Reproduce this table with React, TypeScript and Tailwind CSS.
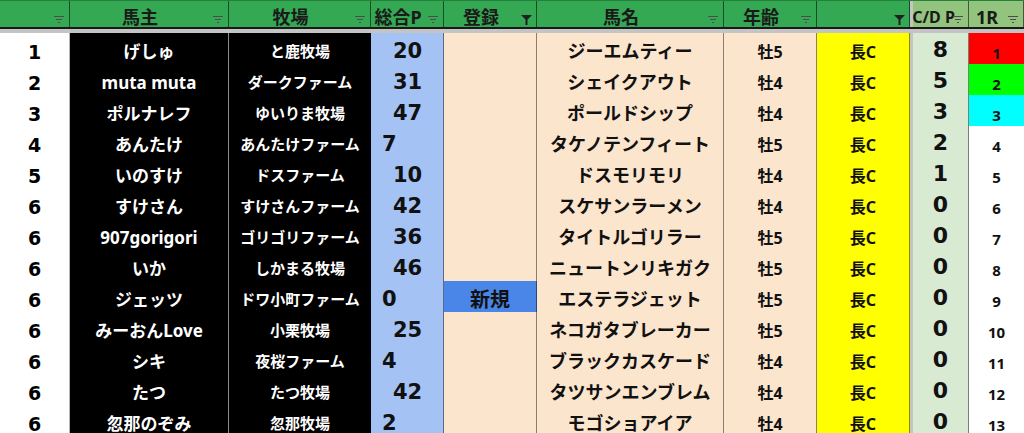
import React from 'react';

type Row = {
  rank: number;
  owner: string;
  farm: string;
  total: number;
  entry: string;
  horse: string;
  age: string;
  dist: string;
  cdp: number;
  r1: number;
};

const rows: Row[] = [
  { rank: 1, owner: 'げしゅ', farm: 'と鹿牧場', total: 20, entry: '', horse: 'ジーエムティー', age: '牡5', dist: '長C', cdp: 8, r1: 1 },
  { rank: 2, owner: 'muta muta', farm: 'ダークファーム', total: 31, entry: '', horse: 'シェイクアウト', age: '牡4', dist: '長C', cdp: 5, r1: 2 },
  { rank: 3, owner: 'ポルナレフ', farm: 'ゆいりま牧場', total: 47, entry: '', horse: 'ポールドシップ', age: '牡4', dist: '長C', cdp: 3, r1: 3 },
  { rank: 4, owner: 'あんたけ', farm: 'あんたけファーム', total: 7, entry: '', horse: 'タケノテンフィート', age: '牡5', dist: '長C', cdp: 2, r1: 4 },
  { rank: 5, owner: 'いのすけ', farm: 'ドスファーム', total: 10, entry: '', horse: 'ドスモリモリ', age: '牡4', dist: '長C', cdp: 1, r1: 5 },
  { rank: 6, owner: 'すけさん', farm: 'すけさんファーム', total: 42, entry: '', horse: 'スケサンラーメン', age: '牡4', dist: '長C', cdp: 0, r1: 6 },
  { rank: 6, owner: '907gorigori', farm: 'ゴリゴリファーム', total: 36, entry: '', horse: 'タイトルゴリラー', age: '牡5', dist: '長C', cdp: 0, r1: 7 },
  { rank: 6, owner: 'いか', farm: 'しかまる牧場', total: 46, entry: '', horse: 'ニュートンリキガク', age: '牡5', dist: '長C', cdp: 0, r1: 8 },
  { rank: 6, owner: 'ジェッツ', farm: 'ドワ小町ファーム', total: 0, entry: '新規', horse: 'エステラジェット', age: '牡5', dist: '長C', cdp: 0, r1: 9 },
  { rank: 6, owner: 'みーおんLove', farm: '小栗牧場', total: 25, entry: '', horse: 'ネコガタブレーカー', age: '牡5', dist: '長C', cdp: 0, r1: 10 },
  { rank: 6, owner: 'シキ', farm: '夜桜ファーム', total: 4, entry: '', horse: 'ブラックカスケード', age: '牡4', dist: '長C', cdp: 0, r1: 11 },
  { rank: 6, owner: 'たつ', farm: 'たつ牧場', total: 42, entry: '', horse: 'タツサンエンブレム', age: '牡4', dist: '長C', cdp: 0, r1: 12 },
  { rank: 6, owner: '忽那のぞみ', farm: '忽那牧場', total: 2, entry: '', horse: 'モゴショアイア', age: '牡4', dist: '長C', cdp: 0, r1: 13 },
];

const cols = 'grid grid-cols-[70px_159px_142px_73px_93px_187px_93px_93px_3px_56px_55px]';

// the sheet's dotted hairlines, drawn as a half-tone line so they read the same
const dotR = 'border-r border-r-black/45';
const dotB = 'border-b border-b-black/45';

// little "sortable" marker in each header cell
const FilterLines = () => (
  <svg width="10" height="8" viewBox="0 0 10 8" className="absolute right-[5px] top-[15px]">
    <path d="M0 0.5h10M2 3.5h6M4 6.5h2" stroke="#4d4d4d" strokeWidth="1" />
  </svg>
);

// filled funnel = column has an active filter
const FilterOn = () => (
  <svg width="11" height="10" viewBox="0 0 11 10" className="absolute right-[4px] top-[14px]">
    <path d="M0 0h11L6.5 4.5V10h-2V4.5z" fill="#1f1f1f" />
  </svg>
);

const Head: React.FC<{ label?: string; active?: boolean; light?: boolean; small?: boolean }> = ({ label, active, light, small }) => (
  <div
    className={`relative flex items-center justify-center pt-[5px] border-r border-r-black/55 font-bold text-[#1a1a1a] ${
      light ? 'bg-[#93c47d]' : 'bg-[#34a853]'
    } ${small ? 'text-[16px] pr-[14px]' : 'text-[18px] pr-[18px]'}`}
  >
    <span className="whitespace-nowrap leading-none">{label}</span>
    {active ? <FilterOn /> : <FilterLines />}
  </div>
);

const r1Bg = (n: number) => {
  if (n === 1) return 'bg-[#ff0000]';
  if (n === 2) return 'bg-[#00ff00]';
  if (n === 3) return 'bg-[#00ffff]';
  return 'bg-white';
};

const App: React.FC = () => {
  return (
    <div className="w-[1024px] h-[433px] overflow-hidden bg-white font-['Noto_Sans','Noto_Sans_CJK_JP',sans-serif]">
      {/* Header */}
      <div className={`${cols} h-[29px] border-t border-[#23803d] border-b-2 border-b-[#1a1a1a]`}>
        <Head />
        <Head label="馬主" />
        <Head label="牧場" />
        <Head label="総合P" />
        <Head label="登録" active />
        <Head label="馬名" />
        <Head label="年齢" />
        <Head active />
        <div className="bg-[#c4c4c4]" />
        <Head label="C/D P" light small />
        <Head label="1R" light />
      </div>
      <div className="h-[4px] bg-[#c4c4c4]" />

      {/* Rows */}
      {rows.map((r, i) => {
        const beforeLast = i === rows.length - 2;
        const peachBottom = beforeLast ? 'border-b border-b-[#cfcfcf]' : dotB;
        return (
          <div key={i} className={`${cols} h-[31px]`}>
            <div className="flex items-center justify-center pt-[3px] bg-white border-r border-r-[#b5b5b5] border-b border-b-[#dedede] font-['DejaVu_Sans',sans-serif] font-bold text-[19px] text-black">
              {r.rank}
            </div>
            <div className="flex items-center justify-center pt-[2px] bg-black border-r border-r-[#8c8c8c] border-b border-b-[#8c8c8c] font-bold text-[17px] text-white whitespace-nowrap">
              {r.owner}
            </div>
            <div className="flex items-center justify-center pt-[2px] bg-black border-b border-b-[#8c8c8c] font-bold text-[15px] text-white whitespace-nowrap">
              {r.farm}
            </div>
            <div
              className={`flex items-center pt-[2px] bg-[#a4c2f4] ${dotR} border-b border-b-[#c6d5ee] font-['DejaVu_Sans',sans-serif] font-bold text-[21px] text-[#111] ${
                r.total >= 10 ? 'pl-[22px]' : 'pl-[11px]'
              }`}
            >
              {r.total}
            </div>
            <div
              className={`flex items-center justify-center pt-[2px] ${dotR} ${peachBottom} font-bold text-[20px] text-[#111] ${
                r.entry ? 'bg-[#4a86e8]' : 'bg-[#fce5cd]'
              }`}
            >
              {r.entry}
            </div>
            <div className={`flex items-center justify-center pt-[2px] bg-[#fce5cd] ${dotR} ${peachBottom} font-bold text-[18px] text-[#111] whitespace-nowrap`}>
              {r.horse}
            </div>
            <div className={`flex items-center justify-center pt-[2px] bg-[#fce5cd] ${dotR} ${dotB} font-bold text-[16px] text-[#111]`}>
              {r.age}
            </div>
            <div className={`flex items-center justify-center pt-[2px] bg-[#ffff00] ${dotR} ${dotB} font-bold text-[16px] text-[#111]`}>
              {r.dist}
            </div>
            <div className="bg-[#c4c4c4]" />
            <div className={`flex items-center justify-center pb-[2px] bg-[#d9ead3] ${dotR} ${dotB} font-['DejaVu_Sans',sans-serif] font-bold text-[22px] text-[#111]`}>
              {r.cdp}
            </div>
            <div className={`flex items-center justify-center pt-[5px] ${dotB} font-bold text-[15px] text-[#111] ${r1Bg(r.r1)}`}>
              {r.r1}
            </div>
          </div>
        );
      })}
    </div>
  );
};

export default App;
